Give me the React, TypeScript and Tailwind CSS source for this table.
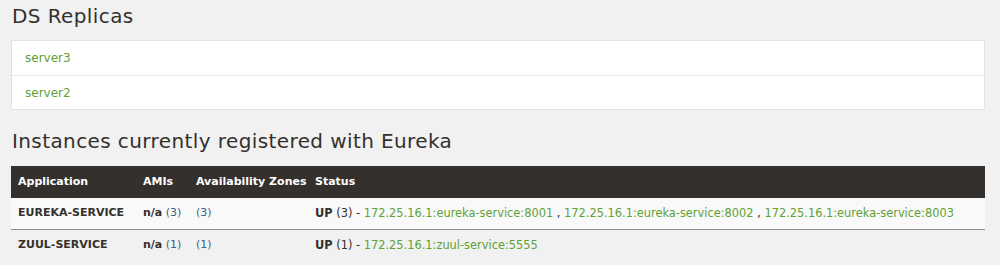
const replicas = ["server3", "server2"]

const instances = [
  {
    app: "EUREKA-SERVICE",
    amis: "(3)",
    zones: "(3)",
    status: "(3)",
    links: [
      "172.25.16.1:eureka-service:8001",
      "172.25.16.1:eureka-service:8002",
      "172.25.16.1:eureka-service:8003",
    ],
  },
  {
    app: "ZUUL-SERVICE",
    amis: "(1)",
    zones: "(1)",
    status: "(1)",
    links: ["172.25.16.1:zuul-service:5555"],
  },
]

const body = "font-['DejaVu_Sans',sans-serif]"
const heading = "font-['DejaVu_Sans',sans-serif] text-[#34302d] tracking-[0.4px]"
const cols = "grid grid-cols-[132px_53px_119px_1fr] items-center"

export default function App() {
  return (
    <div className={`min-h-[265px] w-[1000px] bg-[#f1f1f1] pt-[3px] ${body}`}>
      <div className="ml-[11px] w-[974px]">
        <h1 className={`${heading} pl-px text-[20px] leading-[27px]`}>DS Replicas</h1>

        {/* replica list */}
        <div className="mt-[10px] border border-[#e2e2e2] bg-white">
          {replicas.map((name, i) => (
            <div
              key={name}
              className={`flex h-[34px] items-center pl-[13px] text-[12px] text-[#5fa134] ${
                i > 0 ? "border-t border-[#e8e8e8]" : ""
              }`}
            >
              {name}
            </div>
          ))}
        </div>

        <h2 className={`${heading} mt-[18px] pl-px text-[20px] leading-[26px]`}>
          Instances currently registered with Eureka
        </h2>

        {/* instance table */}
        <div className="mt-[12px] text-[11px]">
          <div className={`${cols} h-[32px] bg-[#34302d] font-bold text-white`}>
            <div className="pl-[7px]">Application</div>
            <div>AMIs</div>
            <div>Availability Zones</div>
            <div>Status</div>
          </div>
          {instances.map((row, i) => (
            <div
              key={row.app}
              className={`${cols} text-[#34302d] ${
                i === 0 ? "h-[32px] border-b border-[#8c8c8c] bg-[#f9f9f9]" : "h-[31px]"
              }`}
            >
              <div className="pl-[7px] font-bold">{row.app}</div>
              <div>
                <b>n/a</b> <span className="text-[#3e5f86]">{row.amis}</span>
              </div>
              <div className="text-[#3e5f86]">{row.zones}</div>
              <div className="whitespace-nowrap text-[11.4px]">
                <b>UP</b> {row.status} -{" "}
                {row.links.map((link, j) => (
                  <span key={link}>
                    {j > 0 && " , "}
                    <a className="text-[#5fa134]">{link}</a>
                  </span>
                ))}
              </div>
            </div>
          ))}
        </div>
      </div>
    </div>
  )
}
